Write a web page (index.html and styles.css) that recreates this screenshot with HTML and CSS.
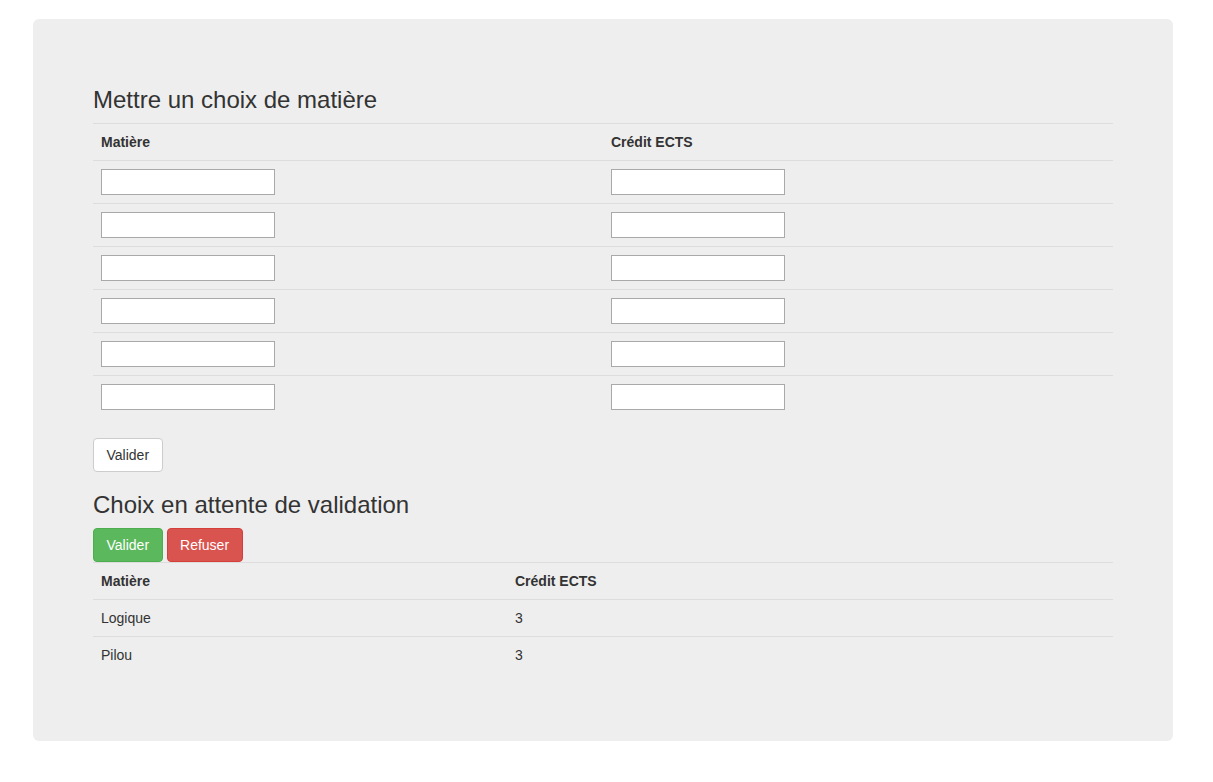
FILE: index.html
```html
<!DOCTYPE html>
<html lang="fr">
<head>
<meta charset="utf-8">
<title>Choix de matière</title>
<link rel="stylesheet" href="styles.css">
</head>
<body>
<div class="jumbotron">
  <h3 class="title">Mettre un choix de matière</h3>
  <table class="table">
    <colgroup><col class="half"><col class="half"></colgroup>
    <thead><tr><th>Matière</th><th>Crédit ECTS</th></tr></thead>
    <tbody>
      <tr><td><input type="text" class="field"></td><td><input type="text" class="field"></td></tr>
      <tr><td><input type="text" class="field"></td><td><input type="text" class="field"></td></tr>
      <tr><td><input type="text" class="field"></td><td><input type="text" class="field"></td></tr>
      <tr><td><input type="text" class="field"></td><td><input type="text" class="field"></td></tr>
      <tr><td><input type="text" class="field"></td><td><input type="text" class="field"></td></tr>
      <tr><td><input type="text" class="field"></td><td><input type="text" class="field"></td></tr>
    </tbody>
  </table>
  <button class="btn btn-default">Valider</button>
  <h3 class="title">Choix en attente de validation</h3>
  <div class="actions">
    <button class="btn btn-success">Valider</button>
    <button class="btn btn-danger">Refuser</button>
  </div>
  <table class="table">
    <colgroup><col class="c1"><col class="c2"></colgroup>
    <thead><tr><th>Matière</th><th>Crédit ECTS</th></tr></thead>
    <tbody>
      <tr><td>Logique</td><td>3</td></tr>
      <tr><td>Pilou</td><td>3</td></tr>
    </tbody>
  </table>
</div>
</body>
</html>
```
FILE: styles.css
```css
* { box-sizing: border-box; }
html, body { margin: 0; padding: 0; background: #fff; }
body {
  font-family: "Liberation Sans", Arial, sans-serif;
  font-size: 14px;
  line-height: 20px;
  color: #333;
}
.jumbotron {
  width: 1140px;
  margin: 19px 0 0 33px;
  padding: 48px 60px;
  background: #eee;
  border-radius: 6px;
}
.title {
  font-size: 24px;
  font-weight: 500;
  line-height: 26px;
  margin: 20px 0 10px;
}
.table {
  width: 100%;
  border-collapse: collapse;
  border-spacing: 0;
  margin-bottom: 20px;
  table-layout: fixed;
}
.half { width: 50%; }
.c1 { width: 414px; }
.c2 { width: auto; }
.table th, .table td {
  padding: 8px;
  text-align: left;
  vertical-align: top;
  border-top: 1px solid #ddd;
  line-height: 20px;
}
.table th { font-weight: bold; }
.field {
  display: block;
  width: 174px;
  height: 26px;
  margin: 0;
  padding: 2px 4px;
  border: 1px solid #a9a9a9;
  background: #fff;
  font-family: inherit;
  font-size: 13px;
}
.actions { display: flex; gap: 4px; }
.btn {
  display: inline-block;
  font-family: inherit;
  font-size: 14px;
  line-height: 20px;
  padding: 6px 12.5px;
  border: 1px solid transparent;
  border-radius: 4px;
  cursor: pointer;
  margin: 0;
}
.btn-default { background: #fff; color: #333; border-color: #ccc; }
.btn-success { background: #5cb85c; color: #fff; border-color: #4cae4c; }
.btn-danger { background: #d9534f; color: #fff; border-color: #d43f3a; }
```
